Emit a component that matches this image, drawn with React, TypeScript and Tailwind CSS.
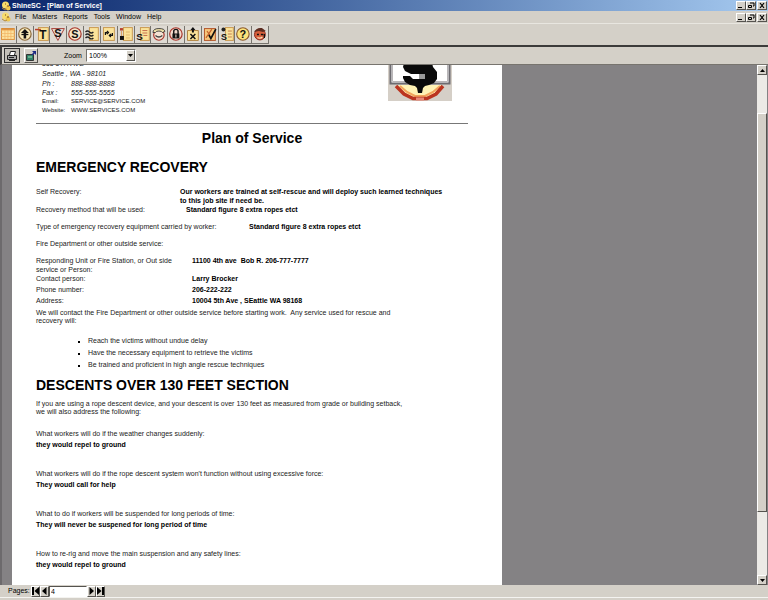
import { useState } from "react";
import type { ReactNode } from "react";
import clsx from "clsx";

const raised = "border border-t-white border-l-white border-r-[#55534f] border-b-[#55534f] bg-[#d4d0c8]";

const menus = ["File", "Masters", "Reports", "Tools", "Window", "Help"];

const bullets = [
  "Reach the victims without undue delay",
  "Have the necessary equipment to retrieve the victims",
  "Be trained and proficient in high angle rescue techniques",
];

const questions = [
  { q: "What workers will do if the weather changes suddenly:", a: "they would repel to ground" },
  { q: "What workers will do if the rope descent system won't function without using excessive force:", a: "They woudl call for help" },
  { q: "What to do if workers will be suspended for long periods of time:", a: "They will never be suspened for long period of time" },
  { q: "How to re-rig and move the main suspension and any safety lines:", a: "they would repel to ground" },
];

function Letter({ x, y, size = 11, children }: { x: number; y: number; size?: number; children: string }) {
  return (
    <text x={x} y={y} fontSize={size} fontWeight="bold" textAnchor="middle" fill="#111" fontFamily="Liberation Sans, Arial, sans-serif">
      {children}
    </text>
  );
}

function Sheet({ x = 5, w = 9 }: { x?: number; w?: number }) {
  return <rect x={x} y="1.5" width={w} height="13" fill="#fbe39a" stroke="#c99a52" />;
}

function Ring({ fill = "#f6e6c8" }: { fill?: string }) {
  return <circle cx="8" cy="8" r="6.3" fill={fill} stroke="#a8362c" strokeWidth="1.2" />;
}

const tools: { name: string; art: ReactNode }[] = [
  {
    name: "Schedule",
    art: (
      <>
        <rect x="1.5" y="2.5" width="13" height="11" fill="#fde3a0" stroke="#dc9440" />
        <path d="M1.5 4.5h13M1.5 7.5h13M1.5 10.5h13M5 3v10M8 3v10M11 3v10" stroke="#f2b868" strokeWidth="0.8" />
        <path d="M2 3h12" stroke="#d98430" strokeWidth="1.5" />
      </>
    ),
  },
  {
    name: "Sites",
    art: (
      <>
        <circle cx="8" cy="8" r="6.3" fill="#f8e9b8" stroke="#8c6a3c" strokeWidth="1.2" />
        <path d="M8 3l4 4H9.3v5.5H6.7V7H4z" fill="#111" />
        <path d="M4.5 8.5h7" stroke="#111" strokeWidth="1.3" />
      </>
    ),
  },
  {
    name: "Timesheets",
    art: (
      <>
        <Sheet x={4.5} w={10} />
        <path d="M1 3.5h6" stroke="#b8402c" strokeWidth="1.5" />
        <Letter x={9} y={13} size={12}>T</Letter>
      </>
    ),
  },
  {
    name: "Bids",
    art: (
      <>
        <path d="M1.5 2.5h13L8 14.5z" fill="#e9ddd4" stroke="#a8443c" />
        <Letter x={8} y={11} size={11}>S</Letter>
      </>
    ),
  },
  {
    name: "Sales",
    art: (
      <>
        <Ring />
        <Letter x={8} y={12} size={11}>S</Letter>
      </>
    ),
  },
  {
    name: "Work orders",
    art: (
      <>
        <Sheet x={5.5} />
        <path d="M1.5 6q2-2 4 0t4 0M1.5 9q2-2 4 0t4 0M1.5 12q2-2 4 0t4 0" fill="none" stroke="#222" strokeWidth="1.3" />
      </>
    ),
  },
  {
    name: "Transfers",
    art: (
      <>
        <Sheet x={2.5} w={11} />
        <path d="M4.5 9V6.5h2M6 5l1.5 1.5L6 8M11.5 7v2.5h-2M10 8L8.5 9.5 10 11" fill="none" stroke="#111" strokeWidth="1.3" />
      </>
    ),
  },
  {
    name: "Items",
    art: (
      <>
        <Sheet x={5.5} />
        <rect x="2" y="2" width="3" height="2.5" fill="#b8402c" />
        <path d="M3.5 5v6" stroke="#d9a060" />
        <rect x="2" y="10" width="4" height="4" fill="#111" />
        <path d="M8 6h4M8 9h4M8 12h4" stroke="#d9ac62" strokeWidth="0.8" />
      </>
    ),
  },
  {
    name: "Invoices",
    art: (
      <>
        <Sheet x={5.5} />
        <path d="M7.5 4.5h5M7.5 7h5M8.5 9.5h4" stroke="#b8543c" strokeWidth="0.8" />
        <Letter x={4.5} y={14} size={10}>S</Letter>
      </>
    ),
  },
  {
    name: "Phone",
    art: (
      <>
        <circle cx="8" cy="9" r="5.3" fill="#f4e2d2" stroke="#a8362c" strokeWidth="1.2" />
        <path d="M2 6.5q0-4 6-4t6 3l-2.5 1Q11 5 8 5T4.5 6.5z" fill="#efe0a8" stroke="#333" strokeWidth="0.9" />
        <path d="M4.5 9.5q3.5 3 7 0" fill="none" stroke="#444" strokeWidth="1.3" />
      </>
    ),
  },
  {
    name: "Lock",
    art: (
      <>
        <Ring fill="#f2d9cc" />
        <path d="M5.8 8V5.5a2.2 2.2 0 0 1 4.4 0V8" fill="none" stroke="#111" strokeWidth="1.4" />
        <rect x="4.5" y="7.5" width="7" height="5" fill="#111" />
        <path d="M8 8.5v3" stroke="#f2d9cc" strokeWidth="1.1" />
      </>
    ),
  },
  {
    name: "Export",
    art: (
      <>
        <path d="M2.5 4.5h11v10h-11z" fill="#fbe39a" stroke="#b08440" />
        <path d="M8 1l2.5 3H9v2.5H7V4H5.5z" fill="#111" />
        <path d="M5.5 8l5 5M10.5 8l-5 5" stroke="#111" strokeWidth="1.5" />
      </>
    ),
  },
  {
    name: "Checklist",
    art: (
      <>
        <rect x="2.5" y="2.5" width="11" height="12" fill="#f6c67c" stroke="#b4582c" />
        <path d="M4 12l6-9M5 5l3 4" stroke="#c4642c" strokeWidth="1.2" />
        <path d="M7 9l2 3.5L14 3" fill="none" stroke="#111" strokeWidth="1.7" />
      </>
    ),
  },
  {
    name: "Payroll",
    art: (
      <>
        <Sheet x={6.5} w={8} />
        <path d="M9 5h4M9 8h4M9 11h4" stroke="#b8643c" strokeWidth="0.8" />
        <circle cx="4.5" cy="3.5" r="2" fill="#222" />
        <Letter x={5} y={14} size={9}>S</Letter>
      </>
    ),
  },
  {
    name: "Help",
    art: (
      <>
        <circle cx="8" cy="8" r="6.3" fill="#fbe27c" stroke="#8c5a2c" strokeWidth="1.1" />
        <Letter x={8} y={12} size={11}>?</Letter>
      </>
    ),
  },
  {
    name: "Support",
    art: (
      <>
        <circle cx="8" cy="8.5" r="5.5" fill="#d8603c" stroke="#8c2c20" />
        <path d="M2 6q3-5 8-4l4 3-3 1-4-1z" fill="#5c2c20" />
        <path d="M5 8.5h2M9 8.5h2.5" stroke="#111" strokeWidth="1.4" />
        <path d="M5.5 11.5q3 1.5 5-.5" fill="none" stroke="#fbe0b8" strokeWidth="1.2" />
        <path d="M12.5 8v4" stroke="#111" strokeWidth="1.3" />
      </>
    ),
  },
];

function AppIcon() {
  return (
    <svg viewBox="0 0 10 10" className="h-[10px] w-[10px] shrink-0" aria-hidden>
      <circle cx="4.5" cy="4" r="3.5" fill="#f7dc6c" />
      <circle cx="7" cy="7" r="2.5" fill="#efc850" />
      <path d="M1 7l3 2 2-1" fill="none" stroke="#b88a30" />
      <path d="M4 3h1M6 5h2" stroke="#7a4a20" />
    </svg>
  );
}

function WindowButtons() {
  const button = clsx(raised, "flex h-[9px] w-[10px] items-center justify-center");
  return (
    <div className="ml-auto flex">
      <button type="button" aria-label="Minimize" className={button}>
        <svg viewBox="0 0 8 7" className="h-[7px] w-2"><path d="M1 5.5h4" stroke="#000" /></svg>
      </button>
      <button type="button" aria-label="Restore" className={button}>
        <svg viewBox="0 0 8 7" className="h-[7px] w-2" fill="none" stroke="#000">
          <path d="M3 1h4v3H6" />
          <path d="M1.5 3.5h3v2h-3z" />
        </svg>
      </button>
      <button type="button" aria-label="Close" className={clsx(button, "ml-px")}>
        <svg viewBox="0 0 8 7" className="h-[7px] w-2"><path d="M2 1l4 5M6 1l-4 5" stroke="#000" strokeWidth="1.2" /></svg>
      </button>
    </div>
  );
}

function Logo() {
  return (
    <svg viewBox="0 -6 64 42" className="h-[42px] w-16" aria-label="Company logo" role="img">
      <rect y="-6" width="64" height="42" fill="#d5cfc7" />
      <path d="M10 20h44l-8 9-8 3H26l-8-3z" fill="#fff2b4" />
      <path d="M12 21l7 6 8 4h10l8-4 7-6" fill="none" stroke="#f2a45c" strokeWidth="2" />
      <path d="M8 21l8 8 9 4.5h14l9-4.5 7-8" fill="none" stroke="#bb3420" strokeWidth="3.5" />
      <path d="M28 34h8" stroke="#e88a78" strokeWidth="3" />
      <path d="M2.5-8v26.5h59V-8z" fill="#fff" stroke="#6d6b70" strokeWidth="2" />
      <path d="M4.500-8v24.500h55V-8" fill="none" stroke="#b9b6b8" />
      <path d="M17-6h26l2 8 4 5v7l-3 4-5 2-4 1-2 2-1 5h-4l-1-5-2-2-5-1-5-3-2-4v-2h7l3 3h6V9h-8l-6-3-2-4z" fill="#0a0a0a" />
      <rect x="31" y="9" width="6" height="5" fill="#999" />
    </svg>
  );
}

function Field({ label, labelClass, children }: { label: string; labelClass: string; children?: ReactNode }) {
  return (
    <div className="flex">
      <dt className={clsx("shrink-0", labelClass)}>{label}</dt>
      <dd className="max-w-[268px] font-bold whitespace-pre-wrap text-black">{children}</dd>
    </div>
  );
}

function PageButton({ label, path }: { label: string; path: string }) {
  return (
    <button type="button" aria-label={label} className={clsx(raised, "flex h-[11px] w-[9px] items-center justify-center")}>
      <svg viewBox="0 0 7 8" className="h-2 w-[7px]" fill="#000"><path d={path} /></svg>
    </button>
  );
}

function ScrollButton({ label, path }: { label: string; path: string }) {
  return (
    <button type="button" aria-label={label} className={clsx(raised, "flex h-[10px] shrink-0 items-center justify-center")}>
      <svg viewBox="0 0 5 3" className="h-[3px] w-[5px]"><path d={path} /></svg>
    </button>
  );
}

function Report() {
  return (
    <article className="w-[490px] shrink-0 bg-white pr-[34px] pl-6 text-[#222]">
      {/* scrolled a little, so the first address line runs under the toolbar */}
      <header className="-mt-[6px] flex items-start justify-between pr-4 pl-[6px]">
        <div>
          <p className="italic">555 5TH AVE</p>
          <p className="italic">Seattle , WA - 98101</p>
          <dl className="grid grid-cols-[29px_auto] leading-[9px]">
            <dt className="italic">Ph :</dt>
            <dd className="italic">888-888-8888</dd>
            <dt className="italic">Fax :</dt>
            <dd className="italic">555-555-5555</dd>
            <dt className="text-[6px]">Email:</dt>
            <dd className="text-[6px]">SERVICE@SERVICE.COM</dd>
            <dt className="text-[6px]">Website:</dt>
            <dd className="text-[6px]">WWW.SERVICES.COM</dd>
          </dl>
        </div>
        <Logo />
      </header>
      <hr className="mt-2 border-[#777]" />
      <h1 className="mt-1 text-center text-sm font-bold text-black">Plan of Service</h1>

      <h2 className="mt-[9px] text-sm font-bold text-black">EMERGENCY RECOVERY</h2>
      <dl className="mt-[10px] flex flex-col gap-2 leading-[9px]">
        <div>
          <Field label="Self Recovery:" labelClass="w-36">
            Our workers are trained at self-rescue and will deploy such learned techniques to this job site if need be.
          </Field>
          <Field label="Recovery method that will be used:" labelClass="w-[150px]">Standard figure 8 extra ropes etct</Field>
        </div>
        <Field label="Type of emergency recovery equipment carried by worker:" labelClass="w-[213px]">
          Standard figure 8 extra ropes etct
        </Field>
        <Field label="Fire Department or other outside service:" labelClass="w-[213px]" />
        <div>
          <Field label="Responding Unit or Fire Station, or Out side service or Person:" labelClass="w-[156px] pr-1">
            {"11100 4th ave  Bob R. 206-777-7777"}
          </Field>
          <div className="flex flex-col gap-[2px]">
            <Field label="Contact person:" labelClass="w-[156px]">Larry Brocker</Field>
            <Field label="Phone number:" labelClass="w-[156px]">206-222-222</Field>
            <Field label="Address:" labelClass="w-[156px]">10004 5th Ave , SEattle WA 98168</Field>
          </div>
        </div>
      </dl>
      <p className="mt-1 max-w-[372px] leading-2 whitespace-pre-wrap">
        {"We will contact the Fire Department or other outside service before starting work.  Any service used for rescue and recovery will:"}
      </p>
      <ul className="mt-[10px] pl-[42px] leading-[12px]">
        {bullets.map((item) => (
          <li key={item} className="flex items-center gap-2">
            <span className="mt-[2px] h-[2px] w-[2px] bg-black" />
            {item}
          </li>
        ))}
      </ul>

      <h2 className="mt-1 text-sm font-bold text-black">DESCENTS OVER 130 FEET SECTION</h2>
      <p className="mt-[5px] max-w-[372px] leading-2">
        If you are using a rope descent device, and your descent is over 130 feet as measured from grade or building setback, we will also address the following:
      </p>
      <dl className="mt-3 flex flex-col gap-[18px] pb-6 leading-[11px]">
        {questions.map(({ q, a }) => (
          <div key={q}>
            <dt>{q}</dt>
            <dd className="font-bold text-black">{a}</dd>
          </div>
        ))}
      </dl>
    </article>
  );
}

export default function App() {
  const [zoom, setZoom] = useState("100%");
  const [page, setPage] = useState("4");

  return (
    <div className="flex h-screen flex-col overflow-hidden bg-[#d4d0c8] font-['Liberation_Sans',Arial,sans-serif] text-[7px] leading-[10px] text-black">
      <div className="flex h-[11px] shrink-0 items-center bg-linear-to-r from-[#0a246a] to-[#a6caf0] px-px font-bold text-white">
        <AppIcon />
        <span className="ml-px">ShineSC - [Plan of Service]</span>
        <WindowButtons />
      </div>

      <nav className="flex h-3 shrink-0 items-center px-px">
        <AppIcon />
        <div className="flex gap-[6px] pl-1">
          {menus.map((menu) => (
            <button key={menu} type="button">{menu}</button>
          ))}
        </div>
        <WindowButtons />
      </nav>

      <div className="flex h-[22px] shrink-0 items-center border-t border-[#e8e6e0]">
        <div className="flex w-[269px]">
          {tools.map(({ name, art }) => (
            <button key={name} type="button" aria-label={name} className="h-[18px] flex-1 border-r border-b border-[#77746e] bg-[#dedad3]">
              <svg viewBox="0 0 16 16" className="h-4 w-full" aria-hidden>{art}</svg>
            </button>
          ))}
        </div>
      </div>

      <div className="flex h-5 shrink-0 items-center border-t-2 border-b border-l-2 border-[#3c3b3a] border-b-[#77746e] pl-[2px]">
        <button type="button" aria-label="Print" className="flex h-[15px] w-4 items-center justify-center border border-[#333] bg-[#c4c0b8]">
          <svg viewBox="0 0 12 12" className="h-3 w-3">
            <path d="M3.5 5l1-3.5h5L8.5 5" fill="#fff" stroke="#222" />
            <path d="M1.5 5.5h9v4h-9z" fill="#a8a8a8" stroke="#222" />
            <path d="M3 7.5h5M3 10.5h6" stroke="#222" />
          </svg>
        </button>
        <button type="button" aria-label="Export report" className={clsx(raised, "ml-1 flex h-[15px] w-[14px] items-center justify-center")}>
          <svg viewBox="0 0 12 12" className="h-3 w-3">
            <path d="M1.5 4.5h7v6h-7z" fill="#2f8068" stroke="#333" />
            <path d="M3 6h4v2H3z" fill="#69b08c" />
            <path d="M7 1h4v4L9.5 3.5l-2 2-1-1 2-2z" fill="#1c2a84" />
          </svg>
        </button>
        <label htmlFor="zoom" className="ml-[26px] w-[22px]">Zoom</label>
        <div className="relative">
          <select
            id="zoom"
            value={zoom}
            onChange={(e) => setZoom(e.target.value)}
            className="block h-[13px] w-[50px] appearance-none border border-[#77746e] border-r-white border-b-white bg-white pl-[2px] leading-[10px]"
          >
            <option>50%</option>
            <option>100%</option>
            <option>200%</option>
          </select>
          <span className={clsx(raised, "pointer-events-none absolute top-px right-px flex h-[11px] w-[9px] items-center justify-center")}>
            <svg viewBox="0 0 5 3" className="h-[3px] w-[5px]"><path d="M0 0h5L2.5 3z" /></svg>
          </span>
        </div>
      </div>

      <main className="flex min-h-0 flex-1 bg-[#848284]">
        <div className="flex flex-1 overflow-hidden border-l-2 border-[#6c6a6c] pl-[10px]">
          <Report />
        </div>
        <div className="mr-px flex w-[10px] flex-col bg-[#eceae6]">
          <ScrollButton label="Scroll up" path="M0 3h5L2.5 0z" />
          <div className="flex-[38]" />
          <div className={clsx(raised, "flex-[399]")} />
          <div className="flex-[63]" />
          <ScrollButton label="Scroll down" path="M0 0h5L2.5 3z" />
        </div>
      </main>

      <footer className="flex h-3 shrink-0 items-center pl-2">
        <label htmlFor="page" className="w-[23px]">Pages:</label>
        <PageButton label="First page" path="M0 0h2v8H0zM7 0v8L2.5 4z" />
        <PageButton label="Previous page" path="M5.5 0v8L1 4z" />
        <input
          id="page"
          value={page}
          onChange={(e) => setPage(e.target.value)}
          className="h-[11px] w-[38px] border border-[#55534f] border-r-white border-b-white bg-white pl-px"
        />
        <PageButton label="Next page" path="M1.5 0v8L6 4z" />
        <PageButton label="Last page" path="M5 0h2v8H5zM0 0v8L4.5 4z" />
      </footer>
      <div className="h-[3px] shrink-0 border-t border-[#f4f3f0]" />
    </div>
  );
}
